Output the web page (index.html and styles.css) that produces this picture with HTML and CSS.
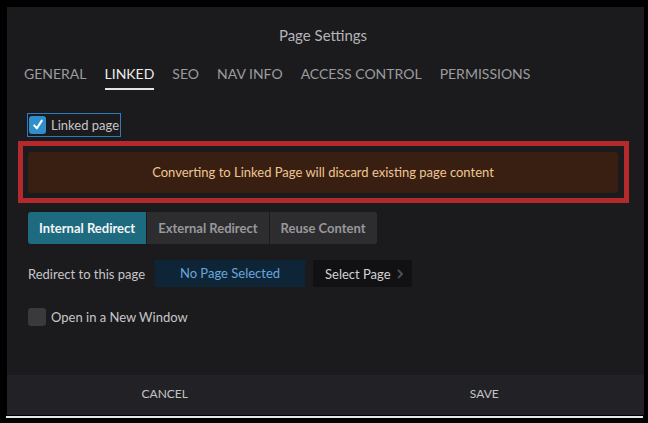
FILE: index.html
```html
<!DOCTYPE html>
<html lang="en">
<head>
  <meta charset="UTF-8">
  <title>Page Settings</title>
  <link rel="stylesheet" href="styles.css">
</head>
<body>

  <div class="dialog">
    <div class="dialog-body">
      <h2 class="dialog-title">Page Settings</h2>

      <!-- Tabs -->
      <div class="tabs">
        <span class="tab">General</span>
        <span class="tab active">Linked</span>
        <span class="tab">SEO</span>
        <span class="tab">Nav Info</span>
        <span class="tab">Access Control</span>
        <span class="tab">Permissions</span>
      </div>

      <label class="check focused">
        <span class="box checked">
          <svg width="12" height="12" viewBox="0 0 12 12"><path d="M2.2 6.4 L4.8 9.4 L9.8 1.6" fill="none" stroke="#fff" stroke-width="2" stroke-linecap="round" stroke-linejoin="round"/></svg>
        </span>
        Linked page
      </label>

      <!-- Warning -->
      <div class="warning-frame">
        <div class="warning">Converting to Linked Page will discard existing page content</div>
      </div>

      <div class="segments">
        <span class="segment active">Internal Redirect</span>
        <span class="segment">External Redirect</span>
        <span class="segment">Reuse Content</span>
      </div>

      <div class="redirect-row">
        <span class="label">Redirect to this page</span>
        <span class="page-value">No Page Selected</span>
        <span class="select-btn">Select Page
          <svg class="chev" width="6" height="10" viewBox="0 0 6 10"><path d="M1 1 L5 5 L1 9" fill="none" stroke="#4d4d50" stroke-width="2"/></svg>
        </span>
      </div>

      <label class="check">
        <span class="box"></span>
        Open in a New Window
      </label>
    </div>

    <div class="dialog-footer">
      <span class="footer-btn">Cancel</span>
      <span class="footer-btn">Save</span>
    </div>
  </div>
  <div class="edge"></div>

</body>
</html>
```

FILE: styles.css
```css
body {
  margin: 0;
  width: 648px;
  height: 423px;
  background: #000;
  font-family: Lato, "Open Sans", sans-serif;
  overflow: hidden;
}

.dialog {
  margin: 7px 4px 0 7px;
  height: 408px;
  background: #1b1b1d;
  display: flex;
  flex-direction: column;
}

.dialog-body {
  flex: 1;
  padding: 0 26px 0 21px;
}

.dialog-title {
  margin: 18px 0 0;
  font-size: 15px;
  font-weight: normal;
  line-height: 20px;
  text-align: center;
  color: #b4b4b8;
}

.tabs {
  display: flex;
  gap: 18px;
  margin: 19px 0 0 -4px;
}

.tab {
  font-size: 14px;
  line-height: 20px;
  text-transform: uppercase;
  color: #9c9c9f;
  padding-bottom: 4px;
  border-bottom: 2px solid transparent;
}

.tab.active {
  color: #ececec;
  border-bottom-color: #e4e4e4;
}

.check {
  display: flex;
  align-items: center;
  gap: 5px;
  font-size: 13px;
  color: #c6c6c8;
  width: max-content;
}

.check.focused {
  margin: 23px 0 0 -1px;
  padding: 2px 1px 2px 1px;
  border: 1px solid #2b7dc0;
  height: 18px;
}

.box {
  width: 18px;
  height: 18px;
  border-radius: 3px;
  background: #3a3a3d;
  display: flex;
  align-items: center;
  justify-content: center;
}

.box.checked {
  background: #2f8ecd;
  width: 17px;
  height: 18px;
}

.warning-frame {
  margin: 4px -11px 0 -10px;
  border: 5px solid #b3292c;
  padding: 6px 6px 5px 5px;
}

.warning {
  height: 41px;
  line-height: 41px;
  background: #391f12;
  border-radius: 3px;
  text-align: center;
  font-size: 13px;
  color: #efc691;
}

.segments {
  display: flex;
  gap: 1px;
  margin-top: 9px;
}

.segment {
  height: 32px;
  line-height: 32px;
  padding: 0 11px;
  background: #2d2d30;
  color: #98989c;
  font-size: 13px;
  font-weight: bold;
}

.segment:first-child {
  border-radius: 3px 0 0 3px;
}

.segment:last-child {
  border-radius: 0 3px 3px 0;
}

.segment.active {
  background: #1e6a7e;
  color: #f2f6f8;
}

.redirect-row {
  display: flex;
  align-items: center;
  margin-top: 16px;
  font-size: 13px;
}

.label {
  color: #c6c6c8;
  width: 127px;
}

.page-value {
  width: 150px;
  height: 27px;
  line-height: 27px;
  text-align: center;
  background: #0e2538;
  color: #6aa6dc;
}

.select-btn {
  display: flex;
  align-items: center;
  gap: 6px;
  margin-left: 8px;
  height: 27px;
  padding: 0 9px 0 12px;
  background: #111113;
  border-radius: 3px;
  color: #d2d2d4;
}

.check:last-child {
  margin-top: 21px;
}

.dialog-footer {
  height: 40px;
  display: flex;
  padding-right: 2px;
  background: #222226;
}

.footer-btn {
  flex: 1;
  text-align: center;
  line-height: 38px;
  font-size: 12px;
  text-transform: uppercase;
  color: #c4c4c6;
}

.footer-btn:first-child {
  padding-right: 4px;
}

.edge {
  height: 2px;
  margin: 1px 5px 0 6px;
  background: #e6e6e6;
}
```
